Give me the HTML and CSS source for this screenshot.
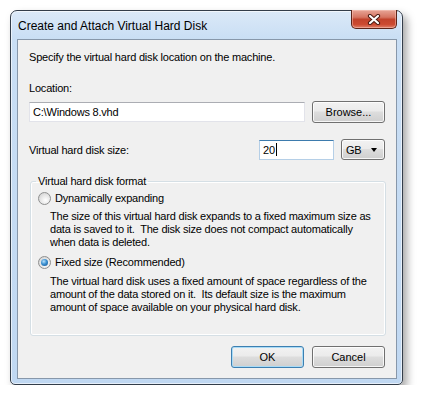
FILE: index.html
```html
<!DOCTYPE html>
<html>
  <head>
    <meta charset="UTF-8" />
    <title>Create and Attach Virtual Hard Disk</title>
    <link rel="stylesheet" href="styles.css">
  </head>
  <body>
    <div class="window">
      <div class="titlebar">
        <span class="title">Create and Attach Virtual Hard Disk</span>
        <span class="close-btn">
          <svg width="14" height="11" viewBox="0 0 14 11">
            <path d="M3 2 L11 9 M11 2 L3 9" stroke="#4a1a12" stroke-width="4.2" stroke-linecap="round" />
            <path d="M3 2 L11 9 M11 2 L3 9" stroke="#fff" stroke-width="2.2" stroke-linecap="round" />
          </svg>
        </span>
      </div>
      <div class="client">
        <p class="intro">Specify the virtual hard disk location on the machine.</p>
        <div class="field-label">Location:</div>
        <div class="row location-row">
          <div class="textbox location">C:\Windows 8.vhd</div>
          <div class="btn">Browse...</div>
        </div>
        <div class="row size-row">
          <span class="size-label">Virtual hard disk size:</span>
          <div class="textbox size focused">20<span class="caret"></span></div>
          <div class="combo">GB<span class="arrow"></span></div>
        </div>
        <fieldset class="group">
          <legend>Virtual hard disk format</legend>
          <div class="option"><span class="radio"></span>Dynamically expanding</div>
          <p class="desc">The size of this virtual hard disk expands to a fixed maximum size as<br>data is saved to it.&nbsp; The disk size does not compact automatically<br>when data is deleted.</p>
          <div class="option second"><span class="radio checked"></span>Fixed size (Recommended)</div>
          <p class="desc">The virtual hard disk uses a fixed amount of space regardless of the<br>amount of the data stored on it.&nbsp; Its default size is the maximum<br>amount of space available on your physical hard disk.</p>
        </fieldset>
        <div class="actions">
          <div class="btn default">OK</div>
          <div class="btn">Cancel</div>
        </div>
      </div>
    </div>
  </body>
</html>
```

FILE: styles.css
```css
body {
  margin: 0;
  padding: 10px 0 0 10px;
  background-color: #fff;
  color: #000;
  font-family: "Liberation Sans", Arial, sans-serif;
  font-size: 11px;
  letter-spacing: -0.2px;
}

/* Aero window frame */
.window {
  width: 393px;
  height: 375px;
  box-sizing: border-box;
  display: flex;
  flex-direction: column;
  padding: 0 5px 5px 6px;
  border: 1px solid #333d4a;
  border-radius: 7px 7px 5px 5px;
  background: linear-gradient(#dbe9f8, #c9def4 28px, #c0d8f2);
  box-shadow: inset 0 0 0 1px rgba(255, 255, 255, 0.6), 4px 5px 9px rgba(0, 0, 0, 0.35);
}
.titlebar {
  flex-shrink: 0;
  height: 28px;
  display: flex;
  justify-content: space-between;
  align-items: flex-start;
}
.title {
  margin: 8px 0 0 1px;
  font-size: 12px;
  line-height: 15px;
  letter-spacing: 0;
  color: #000;
}
.close-btn {
  width: 44px;
  height: 18px;
  margin-top: -1px;
  display: flex;
  align-items: center;
  justify-content: center;
  border: 1px solid #5c2419;
  border-top: none;
  border-radius: 0 0 5px 5px;
  background: linear-gradient(#e7a597, #d67562 40%, #c2432c 52%, #cc4a31 80%, #e0806a);
  box-shadow: inset 0 0 0 1px rgba(255, 210, 200, 0.45);
}

/* dialog client area */
.client {
  flex: 1;
  min-height: 0;
  box-sizing: border-box;
  padding: 10px 10px 0 11px;
  border: 1px solid #8797aa;
  background-color: #f0f0f0;
}
.intro {
  margin: 0;
  line-height: 15px;
}
.field-label {
  margin-top: 16px;
  line-height: 15px;
}
.row {
  display: flex;
  align-items: flex-start;
  justify-content: space-between;
  padding-right: 1px;
}
.location-row {
  margin-top: 5px;
}
.textbox {
  height: 20px;
  box-sizing: border-box;
  margin-top: 1px;
  padding: 0 3px;
  line-height: 18px;
  background-color: #fff;
  border: 1px solid #e2e3ea;
  border-top-color: #abadb3;
}
.location {
  width: 276px;
}
.size-row {
  margin-top: 16px;
  align-items: center;
}
.size-label {
  flex: 1;
}
.size {
  width: 75px;
  margin: 0 7px 0 0;
}
.focused {
  border-color: #b5cfe7;
  border-top-color: #3d7bad;
}
.caret {
  display: inline-block;
  width: 1px;
  height: 13px;
  margin-left: 1px;
  vertical-align: -2px;
  background-color: #000;
}

/* push buttons */
.btn {
  width: 73px;
  height: 22px;
  box-sizing: border-box;
  text-align: center;
  line-height: 20px;
  letter-spacing: 0;
  border: 1px solid #707070;
  border-radius: 3px;
  background: linear-gradient(#f2f2f2, #ebebeb 45%, #dddddd 50%, #cfcfcf);
  box-shadow: inset 0 0 0 1px rgba(255, 255, 255, 0.8);
}
.btn.default {
  border-color: #3c7fb1;
  box-shadow: inset 0 0 0 1px #a9dbf6;
}
.combo {
  width: 44px;
  height: 21px;
  box-sizing: border-box;
  display: flex;
  align-items: center;
  justify-content: space-between;
  padding: 0 7px 0 4px;
  border: 1px solid #707070;
  border-radius: 3px;
  background: linear-gradient(#f2f2f2, #ebebeb 45%, #dddddd 50%, #cfcfcf);
  box-shadow: inset 0 0 0 1px rgba(255, 255, 255, 0.8);
}
.arrow {
  width: 0;
  height: 0;
  border-left: 3.5px solid transparent;
  border-right: 3.5px solid transparent;
  border-top: 4px solid #000;
}

/* format group box */
.group {
  margin: 14px 0 0 1px;
  padding: 0 7px 21px 7px;
  border: 1px solid #d5dfe5;
  border-radius: 3px;
  box-shadow: inset 0 0 0 1px #fff;
}
.group legend {
  padding: 0 2px;
  margin-left: -2px;
  line-height: 15px;
}
.option {
  display: flex;
  align-items: center;
  margin-top: 2px;
  line-height: 15px;
}
.option.second {
  margin-top: 6px;
}
.radio {
  width: 11px;
  height: 11px;
  margin-right: 4px;
  display: flex;
  align-items: center;
  justify-content: center;
  border: 1px solid #8e8f8f;
  border-radius: 50%;
  background: radial-gradient(circle at 60% 65%, #ffffff, #e6e6e6 50%, #cbcbcb);
}
.radio.checked::after {
  content: "";
  width: 7px;
  height: 7px;
  border-radius: 50%;
  background: radial-gradient(circle at 40% 35%, #b9e2fb, #3a8fd0 45%, #124f8c);
}
.desc {
  margin: 4px 0 0 12px;
  line-height: 13px;
  white-space: nowrap;
}
.option.second + .desc {
  margin-top: 5px;
}
.actions {
  display: flex;
  justify-content: flex-end;
  gap: 8px;
  margin-top: 10px;
  padding-right: 1px;
}
```
